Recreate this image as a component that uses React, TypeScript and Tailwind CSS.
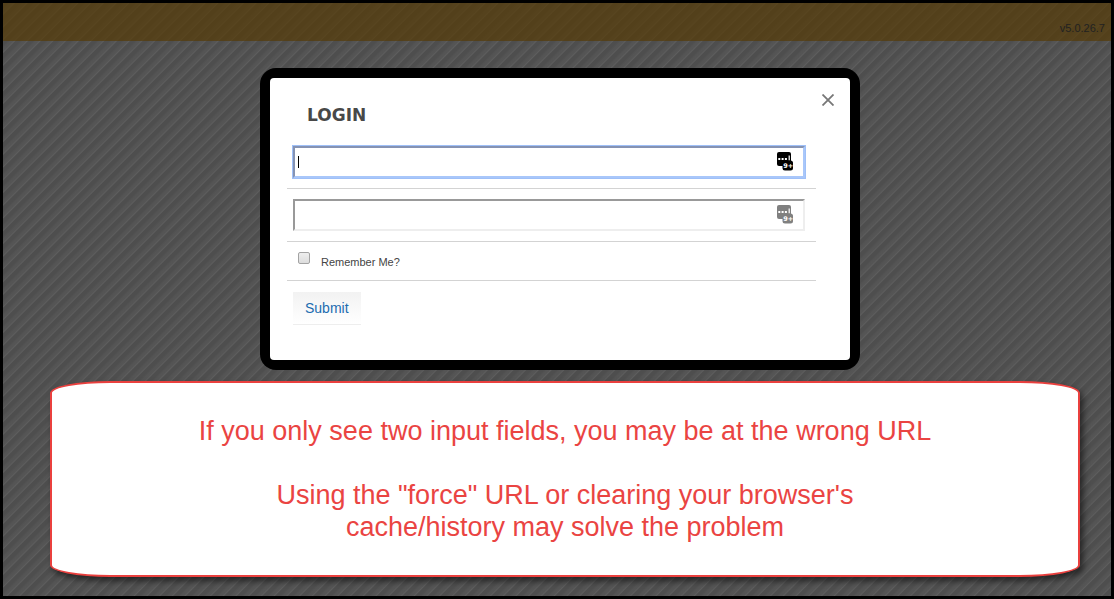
import React from "react";

function ManagerIcon({ className }: { className: string }) {
  return (
    <svg viewBox="0 0 17 19" className={className} aria-hidden="true">
      <rect x="0" y="0" width="14" height="14" rx="2" fill="currentColor" />
      <g fill="#fff">
        <rect x="1.3" y="6" width="2" height="2" />
        <rect x="4.6" y="6" width="2" height="2" />
        <rect x="7.9" y="6" width="2" height="2" />
        <rect x="11.6" y="3.5" width="1.2" height="5" />
      </g>
      <rect x="5.5" y="8.5" width="10.5" height="10" rx="2.5" fill="currentColor" />
      <text x="6.2" y="16" fill="#fff" fontSize="6.5" fontWeight="700" fontFamily="'DejaVu Sans', Verdana, sans-serif">
        9+
      </text>
    </svg>
  );
}

function CredentialField({ label, type, focused }: { label: string; type: string; focused?: boolean }) {
  return (
    <div className="relative border-b border-[#d3d3d3] px-1.5 py-2.5">
      <input
        type={type}
        aria-label={label}
        autoFocus={focused}
        className="block h-8 w-full max-w-128 border-2 border-t-[#999] border-r-[#eee] border-b-[#eee] border-l-[#999] bg-white pr-10 pl-0.5 text-sm text-black caret-transparent outline-none focus:border-t-[#8593b3] focus:border-r-[#a9c7fa] focus:border-b-[#a9c7fa] focus:border-l-[#8593b3] focus:shadow-[0_0_0_1px_#9fc0f8]"
      />
      {focused && <span className="pointer-events-none absolute top-5 left-[11px] h-3 w-px bg-black" />}
      <ManagerIcon
        className={focused ? "absolute top-4 right-[22px] h-[19px] w-[17px] text-black" : "absolute top-4 right-[22px] h-[19px] w-[17px] text-[#808080]"}
      />
    </div>
  );
}

export default function App() {
  return (
    <div className="flex min-h-screen flex-col border-3 border-black bg-[#505050] bg-[repeating-linear-gradient(135deg,#4e4e4e_0px,#4e4e4e_3px,#545454_5px,#555555_7px,#5d5d5d_8px,#4e4e4e_9px)] font-['Liberation_Sans',Arial,sans-serif]">
      <header className="flex h-[38px] items-end justify-end bg-[#563900]/65 px-1.5 pb-1.5 text-[11px] leading-[14px] text-[#222]">
        v5.0.26.7
      </header>
      <main className="flex flex-col">
        <div className="mt-[27px] pl-1.5">
          <section role="dialog" aria-labelledby="login-title" className="relative mx-auto w-full max-w-[600px] rounded-2xl bg-black p-2.5">
            <div className="rounded bg-white pt-7 pr-[34px] pb-[35px] pl-[17px]">
              <button type="button" aria-label="Close" className="absolute top-6 right-6 flex size-4 items-center justify-center text-[#777]">
                <svg viewBox="0 0 12 12" className="size-3" fill="none" stroke="currentColor" strokeWidth="1.8">
                  <path d="M.5 .5l11 11M11.5 .5L.5 11.5" />
                </svg>
              </button>
              <h1 id="login-title" className="pl-5 font-['DejaVu_Sans',Verdana,sans-serif] text-[17px] leading-[18px] font-bold text-[#484848]">
                LOGIN
              </h1>
              <form className="mt-3" onSubmit={(e) => e.preventDefault()}>
                <CredentialField label="User name" type="text" focused />
                <CredentialField label="Password" type="password" />
                <div className="flex h-[39px] items-start border-b border-[#d3d3d3] pl-[11px]">
                  <input
                    id="remember"
                    type="checkbox"
                    className="mt-2.5 size-3 appearance-none rounded-xs border border-[#a3a3a3] bg-linear-to-b from-[#eee] to-[#ddd] checked:bg-[#7d95c4]"
                  />
                  <label htmlFor="remember" className="mt-[13px] ml-[11px] text-[11px] leading-[14px] text-[#444]">
                    Remember Me?
                  </label>
                </div>
                <button type="submit" className="mt-[11px] ml-1.5 h-[33px] border-b border-[#eee] bg-linear-to-b from-[#f2f2f2] to-white px-3 text-sm text-[#1c6cb0]">
                  Submit
                </button>
              </form>
            </div>
          </section>
        </div>
        <aside className="mt-[11px] mr-[31px] mb-[19px] ml-[47px] flex flex-col justify-center gap-8 rounded-[60px/12px] border-2 border-[#ea403e] bg-white py-8 text-center text-[27px] leading-8 text-[#ea4442] shadow-[3px_4px_6px_rgba(0,0,0,0.55)]">
          <p>If you only see two input fields, you may be at the wrong URL</p>
          <p>
            Using the "force" URL or clearing your browser's
            <br />
            cache/history may solve the problem
          </p>
        </aside>
      </main>
    </div>
  );
}
